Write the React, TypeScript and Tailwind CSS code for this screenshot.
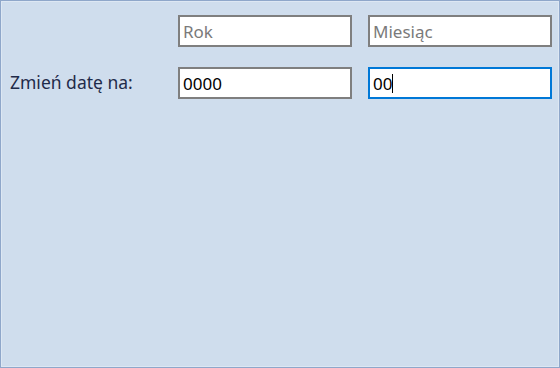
import React from "react";

export default function App() {
  const font = { fontFamily: '"Noto Sans", "Open Sans", sans-serif' };
  return (
    <div className="w-[560px] h-[368px] bg-[#cfdded] border border-[#8fa7ca]" style={font}>
      <div className="w-full h-full border border-[#dde7f3]">
        <div className="grid grid-cols-[152px_174px_184px] gap-x-[16px] gap-y-[20px] pt-[13px] pl-[8px] items-center">
          <div />
          <div className="h-[32px] bg-white border-2 border-[#7f7f7f] flex items-center pl-[3px]">
            <span className="text-[17px] text-[#7a7a7a] leading-none">Rok</span>
          </div>
          <div className="h-[32px] bg-white border-2 border-[#7f7f7f] flex items-center pl-[3px]">
            <span className="text-[17px] text-[#7a7a7a] leading-none">Miesiąc</span>
          </div>
          <div className="text-[17.5px] text-[#1f2b4a] leading-none">Zmień datę na:</div>
          <div className="h-[32px] bg-white border-2 border-[#7f7f7f] flex items-center pl-[3px]">
            <span className="text-[17px] text-black leading-none">0000</span>
          </div>
          <div className="h-[32px] bg-white border-2 border-[#0078d7] flex items-center pl-[3px]">
            <span className="text-[17px] text-black leading-none">00</span>
            <span className="w-[1px] h-[19px] bg-black" />
          </div>
        </div>
      </div>
    </div>
  );
}
